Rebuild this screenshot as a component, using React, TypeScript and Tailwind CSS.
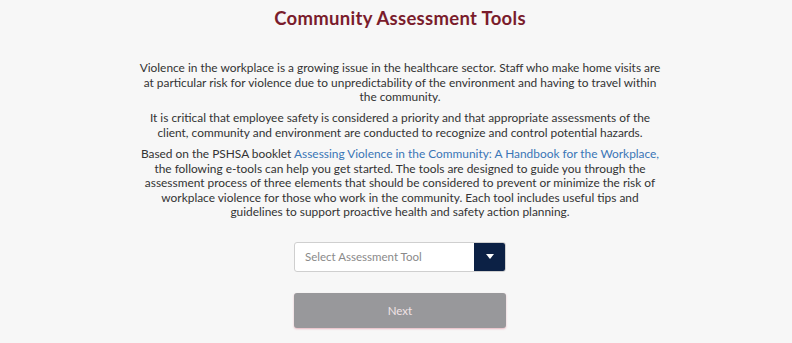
import React from "react";

export default function App() {
  return (
    <div className="min-h-[343px] w-full bg-[#f7f7f7] pl-[8px] text-[#333333]" style={{ fontFamily: 'Lato, "Open Sans", Arial, sans-serif' }}>
      <div className="flex flex-col items-center">
        <h1 className="mt-[7px] text-[18.5px] font-bold leading-[22px] text-[#7a1c2c] tracking-[0.3px]">
          Community Assessment Tools
        </h1>
        <div className="mt-[32px] w-[600px] text-center text-[11.9px] leading-[14.6px] text-[#333333]">
          <p>
            Violence in the workplace is a growing issue in the healthcare sector. Staff who make home visits are
            <br />
            at particular risk for violence due to unpredictability of the environment and having to travel within
            <br />
            the community.
          </p>
          <p className="mt-[6.5px]">
            It is critical that employee safety is considered a priority and that appropriate assessments of the
            <br />
            client, community and environment are conducted to recognize and control potential hazards.
          </p>
          <p className="mt-[6.5px]">
            Based on the PSHSA booklet{" "}
            <a className="text-[#3a75b6]">Assessing Violence in the Community: A Handbook for the Workplace,</a>
            <br />
            the following e-tools can help you get started. The tools are designed to guide you through the
            <br />
            assessment process of three elements that should be considered to prevent or minimize the risk of
            <br />
            workplace violence for those who work in the community. Each tool includes useful tips and
            <br />
            guidelines to support proactive health and safety action planning.
          </p>
        </div>
        <div className="mt-[22px] flex h-[30px] w-[212px] overflow-hidden rounded-[3px] border border-[#cfcfcf] bg-white">
          <div className="flex flex-1 items-center pl-[10px] text-[11.5px] text-[#8a8a8a]">Select Assessment Tool</div>
          <div className="flex w-[31px] items-center justify-center bg-[#0c2145]">
            <svg width="8" height="5" viewBox="0 0 8 5"><path d="M0 0h8L4 5z" fill="#ffffff" /></svg>
          </div>
        </div>
        <button className="mt-[21px] flex h-[35px] w-[212px] items-center justify-center rounded-[3px] bg-[#98989b] text-[11.5px] text-[#f1e3e6] shadow-[0_1px_2px_rgba(200,60,90,0.35)]">
          Next
        </button>
      </div>
    </div>
  );
}
